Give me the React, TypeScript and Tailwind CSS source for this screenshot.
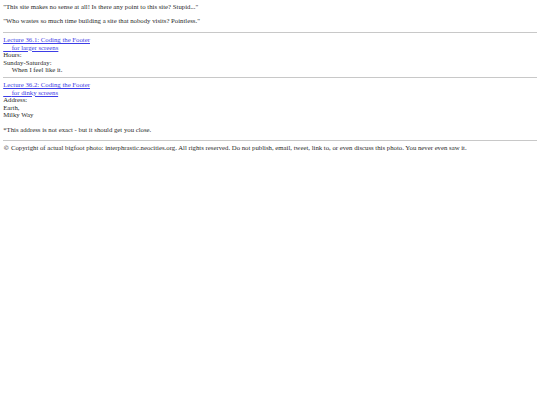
const Hr = () => <hr className="my-[3.4px] border-0 border-t border-[#c8c8c8]" />;

const FooterBlock = ({ title, sub, lines }: { title: string; sub: string; lines: string[] }) => (
  <div>
    <a href="#" className="text-[#3d3de6] underline">
      {title}
      <br />
      {"\u00a0\u00a0\u00a0\u00a0\u00a0"}
      {sub}
    </a>
    {lines.map((l) => (
      <div key={l}>{l}</div>
    ))}
  </div>
);

export default function App() {
  return (
    <div className="min-h-[405px] bg-white px-[3.2px] pt-[3.2px] font-['Liberation_Serif',serif] text-[6.75px] leading-[7.5px] text-[#2a2a2a]">
      <p className="mb-[6.75px]">"This site makes no sense at all! Is there any point to this site? Stupid..."</p>
      <p className="mb-[6.75px]">"Who wastes so much time building a site that nobody visits? Pointless."</p>
      <Hr />
      <FooterBlock
        title="Lecture 36.1: Coding the Footer"
        sub="for larger screens"
        lines={["Hours:", "Sunday-Saturday:", "\u00a0\u00a0\u00a0\u00a0\u00a0When I feel like it."]}
      />
      <Hr />
      <FooterBlock
        title="Lecture 36.2: Coding the Footer"
        sub="for dinky screens"
        lines={["Address:", "Earth,", "Milky Way"]}
      />
      <p className="my-[6.75px]">*This address is not exact - but it should get you close.</p>
      <Hr />
      <p>
        <span className="font-['DejaVu_Serif',serif] text-[6px]">©</span> Copyright of actual bigfoot photo:
        interphrastic.neocities.org. All rights reserved. Do not publish, email, tweet, link to, or even discuss this
        photo. You never even saw it.
      </p>
    </div>
  );
}
